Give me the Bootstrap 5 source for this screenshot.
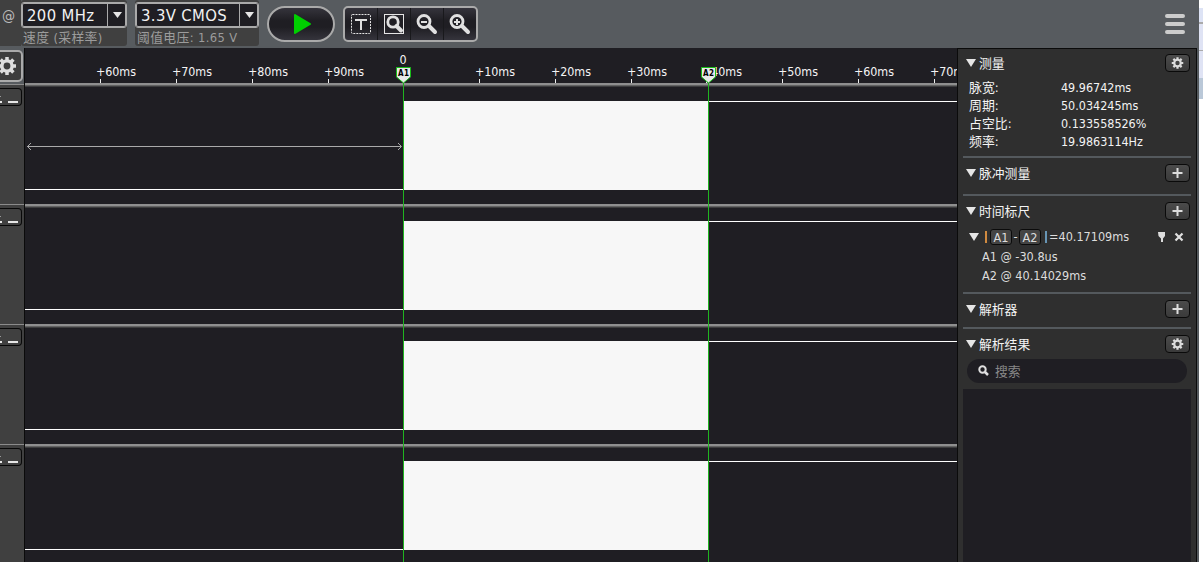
<!DOCTYPE html>
<html lang="zh">
<head>
<meta charset="utf-8">
<title>Logic Analyzer</title>
<link href="https://cdn.jsdelivr.net/npm/bootstrap@5.3.0/dist/css/bootstrap.min.css" rel="stylesheet">
<style>
body{width:1203px;height:562px;background:#555a5e;font-family:"DejaVu Sans Condensed","DejaVu Sans","Noto Sans CJK SC",sans-serif;font-stretch:condensed;font-size:12px;color:#f4f4f4;line-height:18px}
svg{display:block;flex:none}
.app{width:1199px}
.topbar{height:48px;background:#575b5f}
.at{width:21px;height:46px;padding:7px 0 0 2px;background:#404040;color:#bbb;font-size:14.5px}
.pick{height:46px;background:#404040;border-radius:3px}
.pickbox{height:26px;margin-top:2px;border:1px solid #aaa;outline:1px solid #aaa;outline-offset:-2px;border-radius:3px;background:#1f1e23;font-size:16.5px;line-height:25px;color:#f2f2f2}
.pickbox .val{padding-left:5px;white-space:nowrap;letter-spacing:.38px}
.pickbox .arrow{width:19px;border-left:1px solid #aaa}
.cap{font-size:12.8px;line-height:19px;color:#9c9c9c;padding-left:2px;white-space:nowrap}
.capwide{letter-spacing:.38px}
.play{width:68px;height:36px;margin:6px 0 0 8px;border:2px solid #aaa;border-radius:18px;background:linear-gradient(#35343c,#1f1e23 40%,#1f1e23 60%,#35343c)}
.tools{width:135px;height:36px;margin:6px 0 0 8px;border:2px solid #aaa;border-radius:5px;background:linear-gradient(#35343c,#1f1e23 40%,#1f1e23 60%,#35343c)}
.tool{width:33px;border-right:1px solid #19191c}
.tool:last-child{border:0}
.rail{width:25px;background:#404040;border-right:1px solid #0b0b0b}
.railtop{height:36px;background:#575b5f;padding-top:2px}
.gearbtn{width:23px;height:32px;border:2px solid #aaa;border-left:0;border-radius:0 5px 5px 0;background:#3d3d3d}
.chan{height:120px;border-top:1px solid #8b8b8b;padding-top:3px}
.chan .tag{width:22px;height:18px;border:1px solid #080808;border-left:0;border-radius:0 4px 4px 0}
.scope{width:932px;background:#1f1e23}
.side{width:240px;background:#2f2f2f;border:1px solid #0b0b0b;border-bottom:0;padding:0 5px 0 5px}
.sec{border-bottom:2px solid #54595d;width:228px}
.head{height:28px;padding:0 1px 0 3px}
.head .ttl{margin-left:3px;font-size:12.8px;padding-top:2px}
.sbtn{width:25px;height:18px;border:1px solid #0a0a0a;border-radius:4px;background:linear-gradient(#4b4b4b,#3a3a3a)}
.mrow .k{width:92px;padding-left:6px;font-size:12.9px}
.mrow{height:18px;font-size:12.45px}
.chip{width:22px;height:16px;line-height:15px;border:1px solid #0b0b0b;border-radius:3px;background:#444;text-align:center}
.mk{height:19px;padding-left:19px;color:#ddd;line-height:19px;font-size:12.55px}
.search{width:220px;height:24px;border-radius:12px;background:#1f1e23;color:#888;margin:1px 0 0 4px;padding-left:11px}
.res{width:228px;background:#1f1e23;margin-top:6px}
.edge{width:4px;background:linear-gradient(#fff 0 8px,#dde3f5 8px 22px,#aaa 22px 24px,#dfe3f4 24px 50px,#aaa 50px 51px,#dfe3f4 51px 78px,#bac8d8 78px 99px,#fff 99px)}
</style>
</head>
<body class="d-flex overflow-hidden m-0">
<svg width="0" height="0" class="position-absolute"><defs>
<g id="gear"><circle r="5.100" fill="none" stroke="#ddd" stroke-width="3.400"/><path d="M0-9V-5M0 9V5M-9 0H-5M9 0H5M-6.400-6.400L-4-4M6.400 6.400L4 4M-6.400 6.400L-4 4M6.400-6.400L4-4" stroke="#ddd" stroke-width="3.500"/></g>
<path id="tri" d="M0 0H10L5 8Z" fill="#e6e6e6"/>
</defs></svg>
<div class="app d-flex flex-column">
  <header class="topbar d-flex flex-shrink-0">
    <div class="at">@</div>
    <div class="pick" style="width:106px"><div class="pickbox d-flex"><span class="val flex-grow-1">200 MHz</span><span class="arrow d-flex align-items-center justify-content-center"><svg width="9" height="7"><path d="M0 0H9L4.500 6Z" fill="#e6e6e6"/></svg></span></div><div class="cap capwide">速度 (采样率)</div></div>
    <div class="pick" style="width:124px;margin-left:8px"><div class="pickbox d-flex"><span class="val flex-grow-1">3.3V CMOS</span><span class="arrow d-flex align-items-center justify-content-center"><svg width="9" height="7"><path d="M0 0H9L4.500 6Z" fill="#e6e6e6"/></svg></span></div><div class="cap capwide">阈值电压: 1.65 V</div></div>
    <div class="play"><svg width="64" height="32"><path d="M26 7L41 16L26 25Z" fill="#00d000" stroke="#00d000" stroke-width="2" stroke-linejoin="round"/></svg></div>
    <div class="tools d-flex">
      <div class="tool"><svg width="32" height="32"><rect x="6.500" y="6.500" width="19" height="19" rx="1" fill="none" stroke="#e5e5e5" stroke-dasharray="2 1"/><path d="M10 12H22M16 11V22" stroke="#e0e0e0" stroke-width="2"/></svg></div>
      <div class="tool"><svg width="32" height="32"><rect x="6.500" y="6.500" width="19" height="19" fill="none" stroke="#e5e5e5"/><circle cx="15" cy="14" r="5.200" fill="none" stroke="#e0e0e0" stroke-width="2.800"/><path d="M18.500 18L23 22.500" stroke="#e0e0e0" stroke-width="4" stroke-linecap="round"/></svg></div>
      <div class="tool"><svg width="32" height="32"><circle cx="13" cy="13.500" r="6" fill="none" stroke="#e0e0e0" stroke-width="2.800"/><path d="M10 14H16" stroke="#e0e0e0" stroke-width="2"/><path d="M18 18L24 24" stroke="#e0e0e0" stroke-width="4" stroke-linecap="round"/></svg></div>
      <div class="tool"><svg width="32" height="32"><circle cx="13" cy="13.500" r="6" fill="none" stroke="#e0e0e0" stroke-width="2.800"/><path d="M10 14H16M13 11V17" stroke="#e0e0e0" stroke-width="2"/><path d="M18 18L24 24" stroke="#e0e0e0" stroke-width="4" stroke-linecap="round"/></svg></div>
    </div>
    <svg class="ms-auto" width="36" height="48"><path d="M4 16H20M4 24H20M4 32H20" stroke="#ccc" stroke-width="4" stroke-linecap="round"/></svg>
  </header>
  <div class="d-flex flex-grow-1">
    <nav class="rail flex-shrink-0">
      <div class="railtop"><div class="gearbtn"><svg width="21" height="28"><use href="#gear" x="7" y="14"/></svg></div></div>
      <div class="chan"><div class="tag"><svg width="21" height="16"><path d="M0 13H2M8 13H18" stroke="#e6e6e6" stroke-width="2"/><path d="M0 7.500H1" stroke="#999"/></svg></div></div>
      <div class="chan"><div class="tag"><svg width="21" height="16"><path d="M0 13H2M8 13H18" stroke="#e6e6e6" stroke-width="2"/><path d="M0 7.500H1" stroke="#999"/></svg></div></div>
      <div class="chan"><div class="tag"><svg width="21" height="16"><path d="M0 13H2M8 13H18" stroke="#e6e6e6" stroke-width="2"/><path d="M0 7.500H1" stroke="#999"/></svg></div></div>
      <div class="chan"><div class="tag"><svg width="21" height="16"><path d="M0 13H2M8 13H18" stroke="#e6e6e6" stroke-width="2"/><path d="M0 7.500H1" stroke="#999"/></svg></div></div>
    </nav>
    <main class="scope flex-shrink-0">
      <svg width="932" height="514" viewBox="25 48 932 514" font-size="12.4" fill="#f4f4f4">
        <defs><g id="lane"><path d="M25 189.500H403.500M708.500 101.500H957" stroke="#fff"/><rect x="403" y="101" width="306" height="89" fill="#f7f7f7"/></g>
        <g id="bar"><rect x="25" width="932" height="2" fill="#8f8f8f"/><rect x="25" y="2" width="932" height="1" fill="#626262"/><rect x="25" y="3" width="932" height="1" fill="#3c3c3e"/></g></defs>
        <path stroke="#eee" d="M100.500 79V83M176.500 79V83M252.500 79V83M328.500 79V83M479.500 79V83M555.500 79V83M631.500 79V83M706.500 79V83M782.500 79V83M858.500 79V83M934.500 79V83"/>
        <text x="96" y="76" textLength="40">+60ms</text><text x="172" y="76" textLength="40">+70ms</text><text x="248" y="76" textLength="40">+80ms</text><text x="324" y="76" textLength="40">+90ms</text><text x="399.500" y="64">0</text><text x="475" y="76" textLength="40">+10ms</text><text x="551" y="76" textLength="40">+20ms</text><text x="627" y="76" textLength="40">+30ms</text><text x="702" y="76" textLength="40">+40ms</text><text x="778" y="76" textLength="40">+50ms</text><text x="854" y="76" textLength="40">+60ms</text><text x="930" y="76" textLength="40">+70ms</text>
        <use href="#bar" y="83"/><use href="#bar" y="204"/><use href="#bar" y="324"/><use href="#bar" y="444"/>
        <use href="#lane"/><use href="#lane" y="120"/><use href="#lane" y="240"/><use href="#lane" y="360"/>
        <path d="M27 146.500H401M31 143L27.500 146.500L31 150M398 143L401.500 146.500L398 150" stroke="#aaa" fill="none"/>
        <path d="M403.500 83V562M708.500 83V562" stroke="#20b420"/>
        <g fill="#e8e8e8" stroke="#18bd18"><path d="M396.500 67.500H410.500V77L403.500 83L396.500 77Z"/><path d="M701.500 67.500H715.500V77L708.500 83L701.500 77Z"/></g>
        <g fill="#000" font-size="8" font-weight="700"><text x="398" y="76" textLength="11">A1</text><text x="703" y="76" textLength="11">A2</text></g>
      </svg>
    </main>
    <aside class="side flex-shrink-0 d-flex flex-column">
      <section class="sec" style="height:109px">
        <div class="head d-flex align-items-center"><svg width="10" height="8"><use href="#tri"/></svg><span class="ttl flex-grow-1">测量</span><span class="sbtn"><svg width="23" height="16"><use href="#gear" transform="translate(11.500 8) scale(.64)"/></svg></span></div>
        <div class="mrow d-flex" style="margin-top:2px"><span class="k">脉宽:</span><span style="margin-left:6px">49.96742ms</span></div>
        <div class="mrow d-flex"><span class="k">周期:</span><span style="margin-left:6px">50.034245ms</span></div>
        <div class="mrow d-flex"><span class="k">占空比:</span><span style="margin-left:6px">0.133558526%</span></div>
        <div class="mrow d-flex"><span class="k">频率:</span><span style="margin-left:6px">19.9863114Hz</span></div>
      </section>
      <section class="sec" style="height:38px;padding-top:1px"><div class="head d-flex align-items-center"><svg width="10" height="8"><use href="#tri"/></svg><span class="ttl flex-grow-1">脉冲测量</span><span class="sbtn"><svg width="23" height="16"><path d="M6.500 8H16.500M11.500 3V13" stroke="#ddd" stroke-width="2"/></svg></span></div></section>
      <section class="sec" style="height:98px;padding-top:1px"><div class="head d-flex align-items-center"><svg width="10" height="8"><use href="#tri"/></svg><span class="ttl flex-grow-1">时间标尺</span><span class="sbtn"><svg width="23" height="16"><path d="M6.500 8H16.500M11.500 3V13" stroke="#ddd" stroke-width="2"/></svg></span></div>
        <div class="d-flex align-items-center" style="height:24px;padding-left:6px;font-size:12.550px;color:#ddd"><svg width="18" height="12"><use href="#tri" y="2"/><path d="M17 0V12" stroke="#d08a40" stroke-width="2"/></svg><span class="chip" style="margin-left:3px">A1</span><span style="width:7px;text-align:center">-</span><span class="chip">A2</span><svg width="8" height="12"><path d="M5 0V12" stroke="#6795b5" stroke-width="2"/></svg><span>=40.17109ms</span>
        <svg class="ms-auto" width="32" height="12" style="margin-right:4px"><path d="M3 1H10V5L8 7.500V11H6V7.500L3.500 5Z" fill="#ddd"/><path d="M20.500 2.500L27.500 9.500M27.500 2.500L20.500 9.500" stroke="#e0e0e0" stroke-width="2.200"/></svg></div>
        <div class="mk" style="margin-top:-2px">A1 @ -30.8us</div><div class="mk">A2 @ 40.14029ms</div></section>
      <section class="sec" style="height:35px;padding-top:1px"><div class="head d-flex align-items-center"><svg width="10" height="8"><use href="#tri"/></svg><span class="ttl flex-grow-1">解析器</span><span class="sbtn"><svg width="23" height="16"><path d="M6.500 8H16.500M11.500 3V13" stroke="#ddd" stroke-width="2"/></svg></span></div></section>
      <div class="head d-flex align-items-center" style="margin-top:1px"><svg width="10" height="8"><use href="#tri"/></svg><span class="ttl flex-grow-1">解析结果</span><span class="sbtn"><svg width="23" height="16"><use href="#gear" transform="translate(11.500 8) scale(.64)"/></svg></span></div>
      <div class="search d-flex align-items-center"><svg width="12" height="12"><circle cx="4.500" cy="4.500" r="3.200" fill="none" stroke="#e0e0e0" stroke-width="2"/><path d="M7 7L10 10" stroke="#e0e0e0" stroke-width="2.500"/></svg><span style="margin-left:5px;padding-top:2px;font-size:12.800px">搜索</span></div>
      <div class="res flex-grow-1"></div>
    </aside>
  </div>
</div>
<div class="edge"></div>
<script src="https://cdn.jsdelivr.net/npm/bootstrap@5.3.0/dist/js/bootstrap.bundle.min.js"></script>
</body>
</html>
